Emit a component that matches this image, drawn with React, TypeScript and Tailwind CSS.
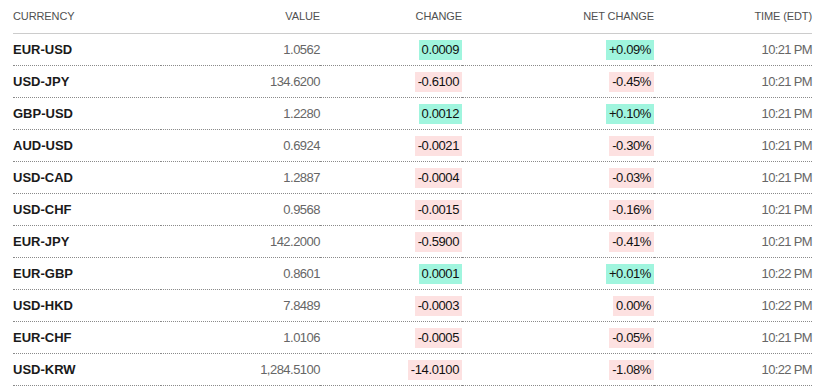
import React from "react";

type Row = { pair: string; value: string; change: string; net: string; time: string; up: boolean };

const rows: Row[] = [
  { pair: "EUR-USD", value: "1.0562", change: "0.0009", net: "+0.09%", time: "10:21 PM", up: true },
  { pair: "USD-JPY", value: "134.6200", change: "-0.6100", net: "-0.45%", time: "10:21 PM", up: false },
  { pair: "GBP-USD", value: "1.2280", change: "0.0012", net: "+0.10%", time: "10:21 PM", up: true },
  { pair: "AUD-USD", value: "0.6924", change: "-0.0021", net: "-0.30%", time: "10:21 PM", up: false },
  { pair: "USD-CAD", value: "1.2887", change: "-0.0004", net: "-0.03%", time: "10:21 PM", up: false },
  { pair: "USD-CHF", value: "0.9568", change: "-0.0015", net: "-0.16%", time: "10:21 PM", up: false },
  { pair: "EUR-JPY", value: "142.2000", change: "-0.5900", net: "-0.41%", time: "10:21 PM", up: false },
  { pair: "EUR-GBP", value: "0.8601", change: "0.0001", net: "+0.01%", time: "10:22 PM", up: true },
  { pair: "USD-HKD", value: "7.8489", change: "-0.0003", net: "0.00%", time: "10:22 PM", up: false },
  { pair: "EUR-CHF", value: "1.0106", change: "-0.0005", net: "-0.05%", time: "10:21 PM", up: false },
  { pair: "USD-KRW", value: "1,284.5100", change: "-14.0100", net: "-1.08%", time: "10:22 PM", up: false },
];

const cols = "grid grid-cols-[148px_159px_142px_192px_158px]";

function Badge({ text, up }: { text: string; up: boolean }) {
  return (
    <span
      className={`inline-flex h-[20px] items-center px-[3px] text-[13px] tracking-[-0.03em] text-[#111] ${
        up ? "bg-[#a0f5de]" : "bg-[#fde1e1]"
      }`}
    >
      {text}
    </span>
  );
}

export default function App() {
  return (
    <div
      className="min-h-[386px] bg-white pl-[13px]"
      style={{ fontFamily: '"Liberation Sans", Arial, sans-serif' }}
    >
      <div className="w-[799px]">
        <div className={`${cols} h-[34px] border-b border-[#cccccc] text-[11px] tracking-[-0.01em] text-[#505050]`}>
          <div className="flex items-center">CURRENCY</div>
          <div className="flex items-center justify-end">VALUE</div>
          <div className="flex items-center justify-end">CHANGE</div>
          <div className="flex items-center justify-end">NET CHANGE</div>
          <div className="flex items-center justify-end">TIME (EDT)</div>
        </div>
        {rows.map((r) => (
          <div key={r.pair} className={`${cols} h-[32px]`}>
            <div className="flex items-center border-b border-dotted border-[#8a8a8a] text-[13px] font-bold text-[#1a1a1a]">
              {r.pair}
            </div>
            <div className="flex items-center justify-end border-b border-dotted border-[#8a8a8a] text-[13px] tracking-[-0.04em] text-[#666]">
              {r.value}
            </div>
            <div className="flex items-center justify-end border-b border-dotted border-[#8a8a8a]">
              <Badge text={r.change} up={r.up} />
            </div>
            <div className="flex items-center justify-end border-b border-dotted border-[#8a8a8a]">
              <Badge text={r.net} up={r.up} />
            </div>
            <div className="flex items-center justify-end border-b border-dotted border-[#8a8a8a] text-[13px] tracking-[-0.05em] text-[#666]">
              {r.time}
            </div>
          </div>
        ))}
      </div>
    </div>
  );
}
